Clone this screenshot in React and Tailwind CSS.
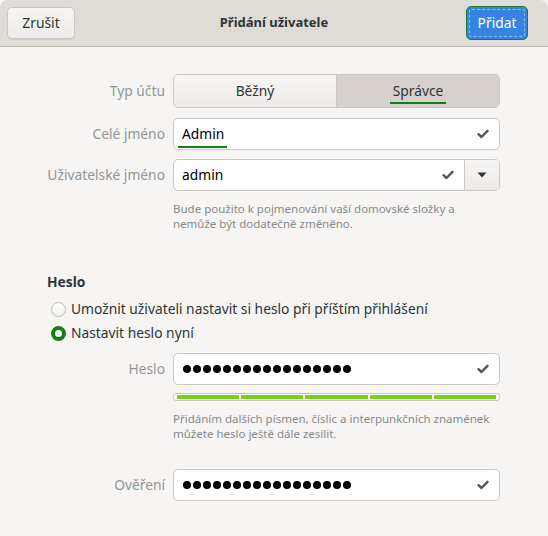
import React from "react";

const font = { fontFamily: '"Noto Sans", "DejaVu Sans", sans-serif' };

function Check() {
  return (
    <svg width="12" height="10" viewBox="0 0 12 10" className="shrink-0">
      <path d="M1.5 5.2 L4.5 8 L10.5 1.8" fill="none" stroke="#555753" strokeWidth="2.4" strokeLinecap="round" strokeLinejoin="round" />
    </svg>
  );
}

function Dots() {
  return (
    <div className="flex gap-[2px] items-center">
      {Array.from({ length: 17 }).map((_, i) => (
        <span key={i} className="w-[8px] h-[8px] rounded-full bg-black" />
      ))}
    </div>
  );
}

function Label({ children }) {
  return (
    <div className="w-[118px] shrink-0 whitespace-nowrap text-right text-[13.8px] text-[#929595]">{children}</div>
  );
}

export default function App() {
  return (
    <div style={font} className="w-[548px] h-[536px] bg-[#f6f5f4] flex flex-col text-[#2e3436] overflow-hidden">
      {/* header */}
      <div className="h-[47px] shrink-0 bg-[#dfdcd8] border-b border-[#bfb8b1] rounded-tl-[8px] rounded-tr-[8px] flex items-center justify-between px-[7px] relative">
        <button className="h-[32px] w-[68px] rounded-[5px] border border-[#cdc7c2] bg-gradient-to-b from-[#f6f5f4] to-[#edebe9] text-[13.8px] text-[#2e3436] shadow-[0_1px_0_rgba(0,0,0,0.06)]">
          Zrušit
        </button>
        <div className="absolute left-0 right-0 text-center text-[13px] font-bold text-[#2e3436] pointer-events-none">
          Přidání uživatele
        </div>
        <button className="h-[34px] w-[62px] mr-[13px] rounded-[5px] border border-[#217d21] bg-[#3584e4] text-[13.8px] text-white p-[2px]">
          <div className="w-full h-full rounded-[3px] border border-dashed border-[#8fbcf0] flex items-center justify-center">Přidat</div>
        </button>
      </div>

      {/* body */}
      <div className="flex flex-col px-[47px] pt-[27px]">
        <div className="flex items-center gap-[8px]">
          <Label>Typ účtu</Label>
          <div className="flex w-[327px] h-[34px] rounded-[5px] border border-[#cdc7c2] overflow-hidden">
            <div className="flex-1 flex items-center justify-center bg-gradient-to-b from-[#f6f5f4] to-[#edebe9] text-[13.8px] border-r border-[#cdc7c2]">Běžný</div>
            <div className="flex-1 flex items-center justify-center bg-[#d6d1cd] text-[13.8px] relative">
              <span className="relative">
                Správce
                <span className="absolute left-[-3px] right-[-3px] bottom-[-3px] h-[2px] bg-[#15800f]" />
              </span>
            </div>
          </div>
        </div>

        <div className="flex items-center gap-[8px] mt-[10px]">
          <Label>Celé jméno</Label>
          <div className="flex items-center w-[327px] h-[32px] rounded-[5px] border border-[#cdc7c2] bg-white pl-[8px] pr-[10px]">
            <span className="relative text-[13.8px] text-black">
              Admin
              <span className="absolute left-[-4px] right-[-3px] bottom-[-4px] h-[2px] bg-[#15800f]" />
            </span>
            <div className="flex-1" />
            <Check />
          </div>
        </div>

        <div className="flex items-center gap-[8px] mt-[9px]">
          <Label>Uživatelské jméno</Label>
          <div className="flex items-center w-[327px] h-[32px] rounded-[5px] border border-[#cdc7c2] bg-white overflow-hidden">
            <span className="pl-[8px] text-[13.8px] text-black">admin</span>
            <div className="flex-1" />
            <div className="pr-[10px]"><Check /></div>
            <div className="w-[35px] h-full border-l border-[#cdc7c2] bg-gradient-to-b from-[#f6f5f4] to-[#edebe9] flex items-center justify-center">
              <svg width="10" height="6" viewBox="0 0 10 6"><path d="M0.5 0.5 H9.5 L5 5.5 Z" fill="#2e3436" /></svg>
            </div>
          </div>
        </div>

        <div className="ml-[126px] mt-[10px] whitespace-nowrap text-[11.5px] leading-[15px] text-[#878a89]">
          Bude použito k pojmenování vaší domovské složky a<br />nemůže být dodatečně změněno.
        </div>

        <div className="mt-[41px] h-[20px] leading-[20px] text-[13.8px] font-bold text-[#2e3436]">Heslo</div>

        <div className="flex items-center h-[20px] mt-[7px] ml-[4px] gap-[5px] text-[13.8px]">
          <span className="w-[15px] h-[15px] rounded-full border border-[#bfb8b1] bg-gradient-to-b from-white to-[#f1f0ef]" />
          <span>Umožnit uživateli nastavit si heslo při příštím přihlášení</span>
        </div>
        <div className="flex items-center h-[20px] mt-[4px] ml-[4px] gap-[5px] text-[13.8px]">
          <span className="w-[15px] h-[15px] rounded-full border-[4px] border-[#15800f] bg-white" />
          <span>Nastavit heslo nyní</span>
        </div>

        <div className="flex items-center gap-[8px] mt-[10px]">
          <Label>Heslo</Label>
          <div className="flex items-center w-[327px] h-[32px] rounded-[5px] border border-[#cdc7c2] bg-white pl-[9px] pr-[10px]">
            <Dots />
            <div className="flex-1" />
            <Check />
          </div>
        </div>

        <div className="ml-[126px] mt-[8px] w-[327px] h-[8px] rounded-[3px] border border-[#cdc7c2] bg-white flex gap-[2px] px-[3px] py-[1px]">
          {[0, 1, 2, 3, 4].map((i) => (
            <span key={i} className="flex-1 bg-[#73d216]" />
          ))}
        </div>

        <div className="ml-[126px] mt-[10px] whitespace-nowrap text-[11.5px] leading-[15px] text-[#878a89]">
          Přidáním dalších písmen, číslic a interpunkčních znamének<br />můžete heslo ještě dále zesílit.
        </div>

        <div className="flex items-center gap-[8px] mt-[28px]">
          <Label>Ověření</Label>
          <div className="flex items-center w-[327px] h-[32px] rounded-[5px] border border-[#cdc7c2] bg-white pl-[9px] pr-[10px]">
            <Dots />
            <div className="flex-1" />
            <Check />
          </div>
        </div>
      </div>
    </div>
  );
}
